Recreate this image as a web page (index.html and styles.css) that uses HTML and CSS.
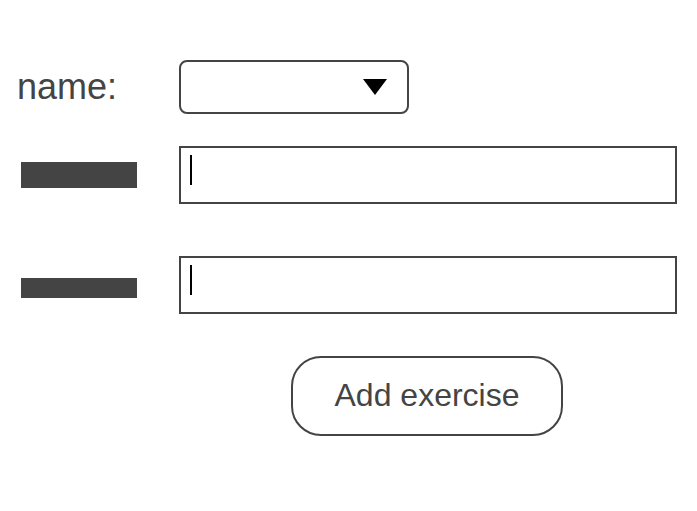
FILE: index.html
```html
<!DOCTYPE html>
<html>
<head>
<meta charset="utf-8">
<link rel="stylesheet" href="styles.css">
</head>
<body>
<form class="form">
  <div class="row row-name">
    <label class="label">name:</label>
    <div class="select">
      <svg class="caret" width="24" height="16" viewBox="0 0 24 16"><polygon points="0,0 24,0 12,16" fill="#000"/></svg>
    </div>
  </div>
  <div class="row row-a">
    <div class="label"><span class="bar bar-a"></span></div>
    <div class="input"><span class="cursor"></span></div>
  </div>
  <div class="row row-b">
    <div class="label"><span class="bar bar-b"></span></div>
    <div class="input"><span class="cursor"></span></div>
  </div>
  <div class="row row-btn">
    <div class="label"></div>
    <div class="btn-wrap"><button type="button" class="btn">Add exercise</button></div>
  </div>
</form>
</body>
</html>
```

FILE: styles.css
```css
* { box-sizing: border-box; }
html, body { margin: 0; padding: 0; background: #fff; }
body { font-family: "Liberation Sans", Arial, sans-serif; color: #444; }
.form { padding-top: 60px; width: 697px; }
.row { display: flex; align-items: center; }
.label { width: 179px; flex: none; }
.row-name { height: 54px; }
.row-name .label { font-size: 36px; padding-left: 17px; line-height: 54px; }
.select {
  width: 230px; height: 54px; border: 2px solid #444; border-radius: 8px;
  display: flex; align-items: center; justify-content: flex-end; padding-right: 20px;
}
.caret { display: block; margin-top: 0; }
.row-a { margin-top: 32px; height: 58px; }
.row-b { margin-top: 52px; height: 58px; }
.bar { display: block; background: #444; width: 116px; margin-left: 21px; }
.bar-a { height: 26px; }
.bar-b { height: 20px; margin-top: 6px; }
.input {
  width: 498px; height: 58px; border: 2px solid #444; padding: 7px 0 0 9px;
}
.cursor { display: block; width: 2px; height: 30px; background: #000; }
.row-btn { margin-top: 42px; }
.btn-wrap { width: 498px; display: flex; justify-content: center; padding-right: 2px; }
.btn {
  width: 272px; height: 80px; border: 2px solid #444; border-radius: 30px;
  background: #fff; color: #444; font-family: "Liberation Sans", Arial, sans-serif;
  font-size: 32px; padding: 0 0 2px; margin: 0;
}
```
